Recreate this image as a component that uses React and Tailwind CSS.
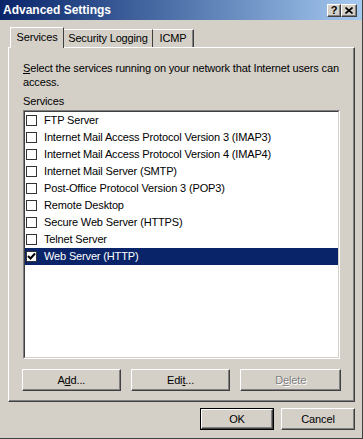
import React from 'react';

const services = [
  { name: 'FTP Server', on: false },
  { name: 'Internet Mail Access Protocol Version 3 (IMAP3)', on: false },
  { name: 'Internet Mail Access Protocol Version 4 (IMAP4)', on: false },
  { name: 'Internet Mail Server (SMTP)', on: false },
  { name: 'Post-Office Protocol Version 3 (POP3)', on: false },
  { name: 'Remote Desktop', on: false },
  { name: 'Secure Web Server (HTTPS)', on: false },
  { name: 'Telnet Server', on: false },
  { name: 'Web Server (HTTP)', on: true },
];

// classic raised 3d edge
const raised =
  'border border-t-white border-l-white border-r-[#404040] border-b-[#404040] shadow-[inset_-1px_-1px_0_#808080]';

function Button({ children, w, disabled, primary }) {
  if (primary) {
    return (
      <div className={`${w} h-[22px] border border-black`}>
        <button className={`w-full h-full flex items-center justify-center ${raised} bg-[#d4d0c8] text-black`}>
          {children}
        </button>
      </div>
    );
  }
  return (
    <button
      className={`${w} h-[22px] flex items-center justify-center ${raised} bg-[#d4d0c8] ${
        disabled ? 'text-[#808080] [text-shadow:1px_1px_0_#fff]' : 'text-black'
      }`}
    >
      {children}
    </button>
  );
}

function CheckBox({ on }) {
  return (
    <div className="w-[11px] h-[11px] border border-[#333] bg-white flex items-center justify-center shrink-0">
      {on && (
        <svg width="9" height="9" viewBox="0 0 9 9">
          <path d="M1 4 L3.5 6.5 L8 1.5" stroke="#000" strokeWidth="2" fill="none" />
        </svg>
      )}
    </div>
  );
}

export default function App() {
  return (
    <div
      className="w-[363px] h-[439px] bg-[#d4d0c8] border-r border-b border-r-[#404040] border-b-[#404040] flex flex-col text-[11px] tracking-[-0.15px] text-black select-none"
      style={{ fontFamily: '"Liberation Sans", Arial, sans-serif' }}
    >
      {/* title bar */}
      <div className="h-[20px] shrink-0 bg-gradient-to-r from-[#0a246a] to-[#a6caf0] flex items-center pl-[3px] pr-[5px]">
        <span className="text-white font-bold text-[12px] tracking-normal flex-1">Advanced Settings</span>
        <div className="flex">
          <div className={`w-[14px] h-[13px] ${raised} bg-[#d4d0c8] flex items-center justify-center font-bold text-[11px] leading-none`}>?</div>
          <div className={`w-[16px] h-[13px] ${raised} bg-[#d4d0c8] flex items-center justify-center`}>
            <svg width="8" height="7" viewBox="0 0 8 7">
              <path d="M0.5 0.5 L7.5 6.5 M7.5 0.5 L0.5 6.5" stroke="#000" strokeWidth="1.6" />
            </svg>
          </div>
        </div>
      </div>

      {/* tabs */}
      <div className="flex items-end pl-[10px] mt-[7px] h-[20px] relative z-10">
        <div className="h-[21px] w-[54px] bg-[#d4d0c8] border-l border-t border-r border-l-white border-t-white border-r-[#404040] flex items-center justify-center pb-[2px] mb-[-1px]">
          Services
        </div>
        <div className="h-[18px] w-[89px] bg-[#d4d0c8] border-l-0 border-t border-r border-t-white border-r-[#404040] flex items-center justify-center">
          Security Logging
        </div>
        <div className="h-[18px] w-[41px] bg-[#d4d0c8] border-t border-r border-t-white border-r-[#404040] shadow-[inset_-1px_0_0_#808080] flex items-center justify-center">
          ICMP
        </div>
      </div>

      {/* panel */}
      <div className="ml-[8px] w-[347px] h-[355px] border border-t-white border-l-white border-r-[#404040] border-b-[#404040] shadow-[inset_-1px_-1px_0_#808080] pl-[14px] pr-[13px] pt-[13px] flex flex-col">
        <p className="leading-[14px] whitespace-nowrap">
          <span className="underline">S</span>elect the services running on your network that Internet users can
          <br />
          access.
        </p>
        <div className="mt-[5px] leading-[14px]">Services</div>
        <div className="mt-[2px] h-[249px] w-[317px] bg-white border border-t-[#808080] border-l-[#808080] border-r-white border-b-white">
          <div className="h-full w-full border border-t-[#404040] border-l-[#404040] border-r-[#d4d0c8] border-b-[#d4d0c8]">
            {services.map((s) => (
              <div
                key={s.name}
                className={`h-[17px] flex items-center pl-[1px] gap-[7px] ${s.on ? 'bg-[#0a246a] text-white' : ''}`}
              >
                <CheckBox on={s.on} />
                <span className="leading-none">{s.name}</span>
              </div>
            ))}
          </div>
        </div>
        <div className="mt-[10px] flex gap-[10px] -ml-[1px]">
          <Button w="w-[99px]">
            A<span className="underline">d</span>d...
          </Button>
          <Button w="w-[100px]">
            Edi<span className="underline">t</span>...
          </Button>
          <Button w="w-[101px]" disabled>
            D<span className="underline">e</span>lete
          </Button>
        </div>
      </div>

      {/* footer */}
      <div className="flex justify-end gap-[7px] mt-[6px] pr-[7px]">
        <Button w="w-[74px]" primary>
          OK
        </Button>
        <Button w="w-[74px]">Cancel</Button>
      </div>
    </div>
  );
}
